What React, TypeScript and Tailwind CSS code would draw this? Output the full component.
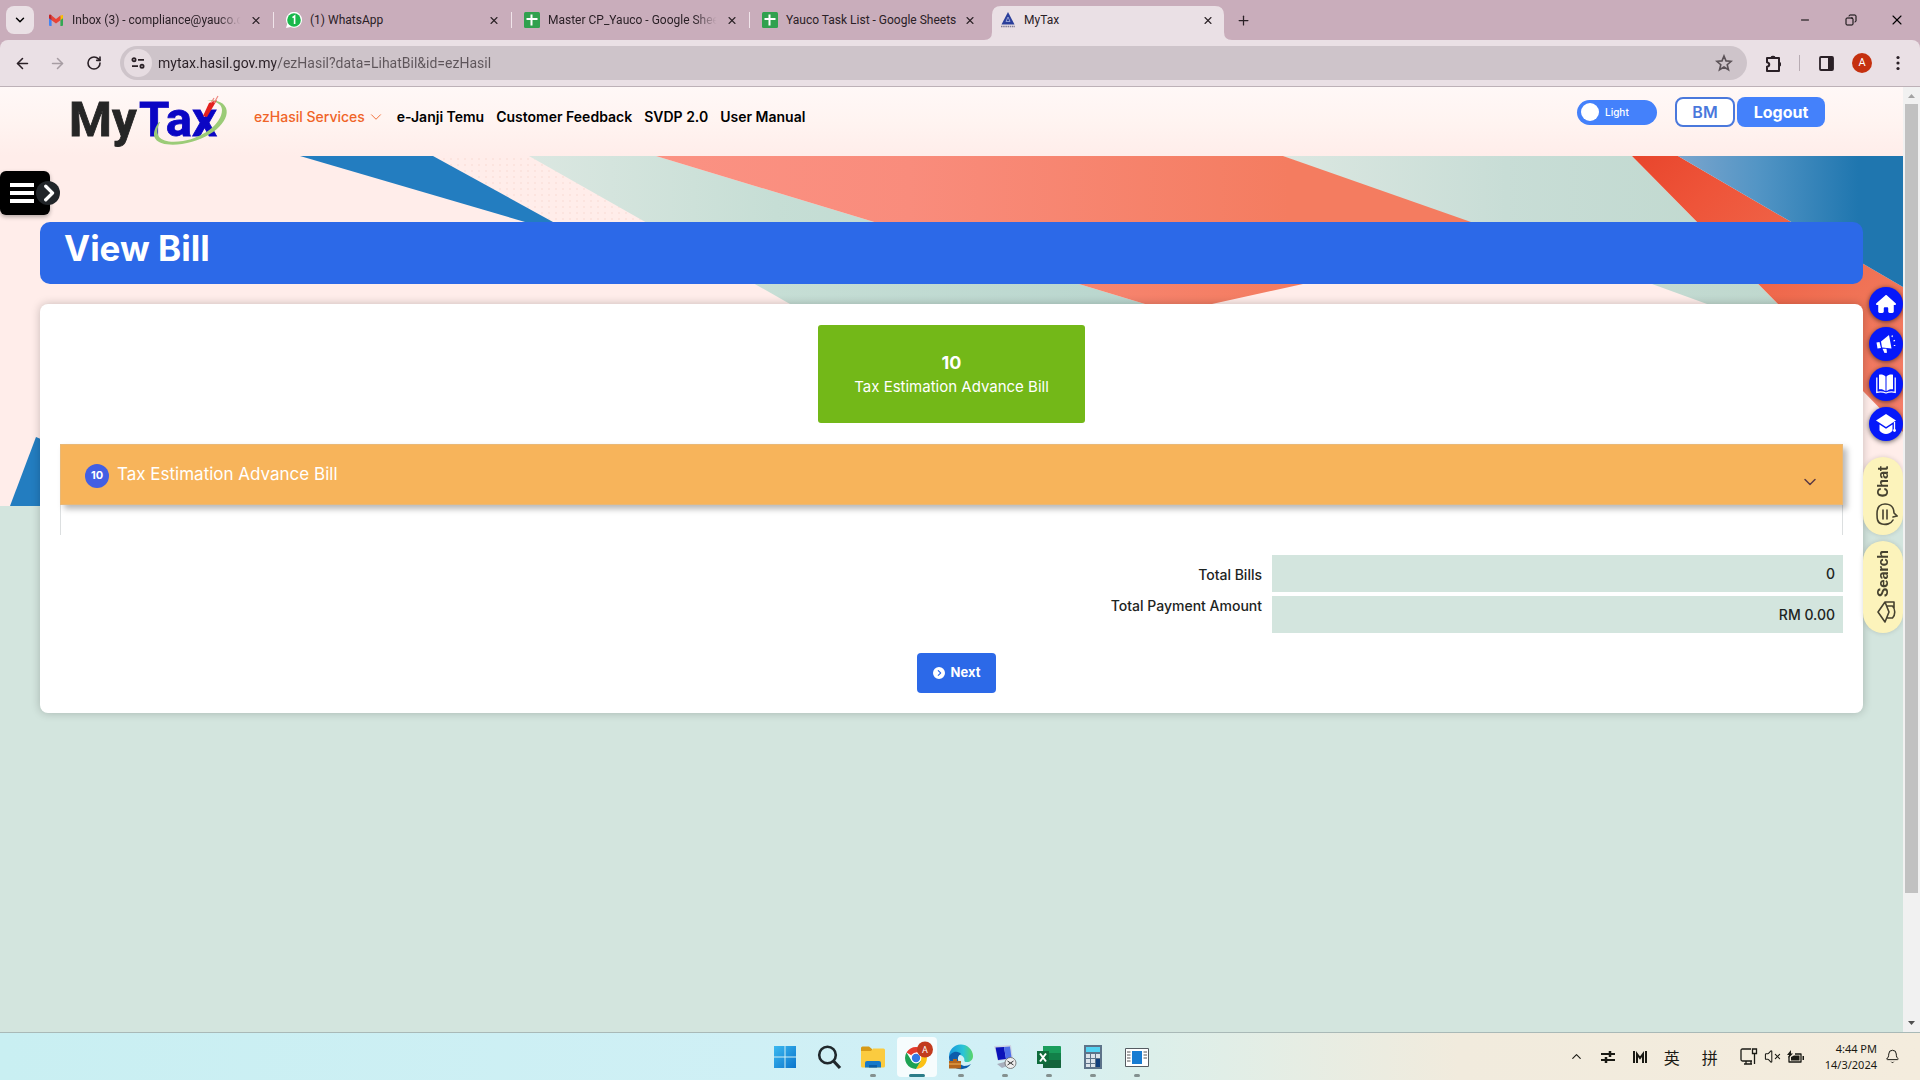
import React from "react";
import { ArrowLeft, ArrowRight, RotateCw, X, Plus, ChevronDown, ChevronUp, Minus, Copy, Bell, VolumeX } from "lucide-react";
import { FaHouse, FaCircleChevronRight, FaChevronRight } from "react-icons/fa6";

const uiFont = "font-['Roboto','Noto_Sans',sans-serif]";

function GmailIcon() {
  return (
    <svg viewBox="0 0 16 16" className="size-4">
      <path d="M1 3.5 3.6 5v9H2a1 1 0 0 1-1-1z" fill="#4285f4" />
      <path d="M15 3.5 12.400 5v9H14a1 1 0 0 0 1-1z" fill="#34a853" />
      <path d="M12.400 3.600 15 3v3.200l-2.600 2z" fill="#fbbc04" />
      <path d="M3.600 3.600 8 7l4.400-3.400v4.600L8 11.400 3.600 8.200z" fill="#ea4335" />
      <path d="M1 4c0-1.600 1.500-1.800 2.600-.8v5L1 6.200z" fill="#c5221f" />
    </svg>
  );
}

function WhatsAppIcon() {
  return (
    <svg viewBox="0 0 16 16" className="size-4">
      <path d="M0 16 1.200 12A8 8 0 1 1 4.500 15z" fill="#fff" />
      <circle cx="8" cy="8" r="6.800" fill="#19b84b" />
      <path d="M6.500 5.600 8.600 4v8" fill="none" stroke="#fff" strokeWidth="1.600" />
    </svg>
  );
}

function SheetsIcon() {
  return (
    <svg viewBox="0 0 16 16" className="size-4">
      <rect width="16" height="16" rx="1.500" fill="#30a14e" />
      <path d="M2.500 7h11M7.500 2.500v11" stroke="#fff" strokeWidth="2" />
    </svg>
  );
}

function MyTaxIcon() {
  return (
    <svg viewBox="0 0 16 16" className="size-4">
      <path d="M8 0 14.500 12.500h-13z" fill="#2b3f9b" />
      <path d="M8 5 10 9.500H6z" fill="none" stroke="#a9b4e0" strokeWidth=".8" />
      <path d="M1 14.500h14" stroke="#7f7b95" strokeWidth="1.500" strokeDasharray="1.500 .7" />
    </svg>
  );
}

const tabs = [
  { title: "Inbox (3) - compliance@yauco.c", icon: <GmailIcon /> },
  { title: "(1) WhatsApp", icon: <WhatsAppIcon /> },
  { title: "Master CP_Yauco - Google Shee", icon: <SheetsIcon /> },
  { title: "Yauco Task List - Google Sheets", icon: <SheetsIcon /> },
];

function TabStrip() {
  return (
    <div className="flex h-10 shrink-0 items-center bg-[#c9adbb] pl-1.5">
      <button aria-label="Search tabs" className="flex size-7 items-center justify-center rounded-lg bg-[#eae0e5]">
        <ChevronDown size={14} strokeWidth={2.5} />
      </button>
      <div className="ml-1.5 flex h-full items-center text-xs text-[#2a2026]">
        {tabs.map((t, i) => (
          <div key={t.title} className="flex h-full w-[238px] items-center pl-2">
            {t.icon}
            <span className={i % 2 === 0 ? "ml-2 w-[172px] whitespace-nowrap [mask-image:linear-gradient(to_right,black_85%,transparent_98%)]" : "ml-2 w-[172px] whitespace-nowrap"}>{t.title}</span>
            <button aria-label="Close tab" className="ml-1.5 flex w-3 justify-center"><X size={13} strokeWidth={2.2} /></button>
            {i < 3 && <span className="ml-auto mr-1 h-4 w-px bg-[#f0e4ea]" />}
          </div>
        ))}
        <div className="relative flex h-full w-[232px] items-center pl-2">
          <svg viewBox="0 0 248 34" className="absolute -left-2 bottom-0 h-[34px] w-[248px]" preserveAspectRatio="none">
            <path d="M0 34q8 0 8-8V9q0-9 9-9H231q9 0 9 9V26q0 8 8 8z" fill="#eae0e5" />
          </svg>
          <span className="relative"><MyTaxIcon /></span>
          <span className="relative ml-2 w-[172px]">MyTax</span>
          <button aria-label="Close tab" className="relative ml-1.5 flex w-3 justify-center"><X size={13} strokeWidth={2.2} /></button>
        </div>
        <button aria-label="New tab" className="ml-3"><Plus size={15} strokeWidth={2} /></button>
      </div>
      <div className="ml-auto flex">
        <button aria-label="Minimize" className="flex w-[46px] items-center justify-center"><Minus size={12} strokeWidth={2} /></button>
        <button aria-label="Restore" className="flex w-[46px] items-center justify-center"><Copy size={12} strokeWidth={2} className="-scale-x-100" /></button>
        <button aria-label="Close" className="flex w-[46px] items-center justify-center"><X size={16} strokeWidth={1.6} /></button>
      </div>
    </div>
  );
}

function Toolbar() {
  return (
    <div className="bg-[#c9adbb]">
      <div className="flex h-[47px] shrink-0 items-center rounded-t-lg border-b border-[#bdb1b7] bg-[#eae0e5] text-[#2a2026]">
        <button aria-label="Back" className="ml-3.5"><ArrowLeft size={17} strokeWidth={2.2} /></button>
        <button aria-label="Forward" className="ml-[18px] text-[#a79da3]"><ArrowRight size={17} strokeWidth={2.2} /></button>
        <button aria-label="Reload" className="ml-5"><RotateCw size={16} strokeWidth={2.4} /></button>
        <div className="ml-[18px] flex h-[34px] flex-1 items-center rounded-full bg-[#cec4ca] pl-1 pr-3.5">
          <button aria-label="Site information" className="flex size-7 items-center justify-center rounded-full bg-[#e6dce1]">
            <svg viewBox="0 0 14 12" className="h-3 w-3.5" fill="none" stroke="#2a2026" strokeWidth="1.800">
              <circle cx="3" cy="2.800" r="1.600" /><path d="M7 2.800h6M1 9.200h6" /><circle cx="11" cy="9.200" r="1.600" />
            </svg>
          </button>
          <input
            aria-label="Address"
            defaultValue="mytax.hasil.gov.my/ezHasil?data=LihatBil&id=ezHasil"
            className="ml-1.5 min-w-0 flex-1 bg-[linear-gradient(to_right,#2a2026_118px,#5e555a_118px)] bg-clip-text text-sm text-transparent caret-black outline-none"
          />
          <button aria-label="Bookmark">
            <svg viewBox="0 0 18 18" className="size-[18px]" fill="none" stroke="#5b5257" strokeWidth="1.600">
              <path d="m9 2 2 4.900 5.200.4-4 3.400 1.300 5.100L9 13l-4.500 2.800 1.300-5.100-4-3.400L7 6.900z" />
            </svg>
          </button>
        </div>
        <button aria-label="Extensions" className="ml-[17px]">
          <svg viewBox="0 0 19 19" className="size-[19px]" fill="none" stroke="#2a2026" strokeWidth="2">
            <path d="M3 4h4.200a2 2 0 0 1 3.600 0H15v4.500a2 2 0 0 1 0 3.500V17H3v-4.200c3-.6 3-4 0-4.600z" strokeLinejoin="round" />
            <path d="M7.200 4a2 2 0 0 1 3.600 0zM15 8.500a2 2 0 0 1 0 3.500z" fill="#2a2026" />
          </svg>
        </button>
        <span className="ml-4 h-4 w-px bg-[#b8acb3]" />
        <button aria-label="Side panel" className="ml-[19px]">
          <svg viewBox="0 0 15 15" className="size-[15px]"><rect x="1" y="1" width="13" height="13" rx="1" fill="none" stroke="#2a2026" strokeWidth="1.800" /><path d="M9 1h5v13H9z" fill="#2a2026" /></svg>
        </button>
        <button className="ml-[18px] flex size-5 items-center justify-center rounded-full bg-[#c5300f] text-[11px] text-white">A</button>
        <button aria-label="Menu" className="ml-6 mr-5">
          <svg viewBox="0 0 4 16" className="h-4 w-1" fill="#2a2026"><circle cx="2" cy="2.500" r="1.600" /><circle cx="2" cy="8" r="1.600" /><circle cx="2" cy="13.500" r="1.600" /></svg>
        </button>
      </div>
    </div>
  );
}

function HeroArt() {
  return (
    <svg viewBox="0 156 1903 350" preserveAspectRatio="none" className="absolute inset-x-0 top-[69px] h-[350px] w-full">
      <defs>
        <linearGradient id="mint"><stop offset="0" stopColor="#dbe7e1" /><stop offset=".4" stopColor="#c6ded5" /><stop offset="1" stopColor="#b9d6ce" /></linearGradient>
        <linearGradient id="coral"><stop offset="0" stopColor="#fb9283" /><stop offset=".3" stopColor="#f98c7c" /><stop offset=".75" stopColor="#f47c60" /></linearGradient>
        <linearGradient id="mint2"><stop offset="0" stopColor="#dbe7e1" /><stop offset=".45" stopColor="#c8ddd6" /><stop offset="1" stopColor="#bfd8ce" /></linearGradient>
        <linearGradient id="red" x2="1" y2="1"><stop offset="0" stopColor="#e8452c" /><stop offset=".2" stopColor="#ee5439" /><stop offset=".7" stopColor="#f07558" /><stop offset="1" stopColor="#f47f6c" /></linearGradient>
        <linearGradient id="blue"><stop offset="0" stopColor="#7ba5cd" /><stop offset=".35" stopColor="#5395c5" /><stop offset=".8" stopColor="#1f76af" /></linearGradient>
        <pattern id="dots" width="7" height="6" patternUnits="userSpaceOnUse"><circle cx="3" cy="3" r=".8" fill="#e9aaa4" fillOpacity=".35" /></pattern>
      </defs>
      <rect y="156" width="1903" height="350" fill="#ffedea" />
      <path d="M433 156h96l120 66H553z" fill="url(#dots)" />
      <path d="M300 156h133l120 66h-28z" fill="#237dc0" />
      <path d="M529 156h127l489 148H790z" fill="url(#mint)" />
      <path d="M1283 156h349l146 148h-71l-55-20-192-59z" fill="url(#mint2)" />
      <path d="M656 156h627l188 66 29 15-197 47-91 20h-67z" fill="url(#coral)" />
      <path d="M1632 156h46l225 131v145L1778 304z" fill="url(#red)" />
      <path d="M1678 156h225v131z" fill="url(#blue)" />
      <path d="m36 437 24 10v59H10z" fill="#237dc0" />
    </svg>
  );
}

function Logo() {
  return (
    <svg viewBox="0 0 160 56" className="h-14 w-40 overflow-visible" role="img" aria-label="MyTax">
      <text x="-3" y="43" fontFamily="Roboto, sans-serif" fontWeight="700" fontSize="49" fill="#262626" stroke="#262626" strokeWidth=".8">My</text>
      <text x="67" y="43" fontFamily="Roboto, sans-serif" fontWeight="700" fontSize="49" fill="#0b06c4" stroke="#0b06c4" strokeWidth=".8">Tax</text>
      <path d="M87 29C74 47 88 54 110 51c28-4 49-23 44-36-3-7-11-8-19-8 9 1 15 4 15 10 0 14-20 28-39 31C91 51 80 45 88 29z" fill="#9bcb77" />
      <path d="m131 23 6-13 8-3-10 17z" fill="#e4211e" />
      <path d="m139 10 3-5M142 10l4-7" stroke="#ee8880" strokeWidth="1.200" />
    </svg>
  );
}

function SiteHeader() {
  return (
    <header className="relative flex h-[69px] items-start bg-linear-to-b from-[#fff8f7] via-[#fff4f1] to-[#ffedea] pl-[72px] pr-[78px] font-['Inter',sans-serif]">
      <div className="mt-1.5 shrink-0"><Logo /></div>
      <nav className="ml-[22px] mt-5 flex items-center gap-3 whitespace-nowrap text-sm font-semibold text-black">
        <a href="#ezhasil" className="flex items-center gap-0.5 font-medium text-[#f06428]">ezHasil Services <ChevronDown size={18} strokeWidth={1.2} /></a>
        <a href="#temu">e-Janji Temu</a>
        <a href="#feedback">Customer Feedback</a>
        <a href="#svdp">SVDP 2.0</a>
        <a href="#manual">User Manual</a>
      </nav>
      <div className="ml-auto mt-2.5 flex items-center">
        <label className="mr-[18px] flex h-[25px] w-20 items-center rounded-full bg-[#4481fb] pl-1 text-[10px] font-medium text-white">
          <input type="checkbox" className="sr-only" />
          <span className="mr-1.5 size-[18px] rounded-full bg-white" />Light
        </label>
        <button className="h-[30px] w-[60px] rounded-lg border-2 border-[#4a78dc] bg-white text-base font-semibold text-[#4a78dc]">BM</button>
        <button className="ml-0.5 h-[30px] w-[88px] rounded-lg bg-[#4481fb] text-base font-bold text-white">Logout</button>
      </div>
    </header>
  );
}

function MegaphoneIcon() {
  return (
    <svg viewBox="0 0 20 20" className="size-5" fill="#fff">
      <path d="M13 1 5 7.500 6 13.500l9.500 1zM3.500 8 .5 8.500 1.500 14.500l3.500-.5zM6.500 14.800l4 0 .5 4-2.500.2z" />
      <path d="m16 3 .4-1.600M17.500 7 19 6.400M17.800 11.500h1.500" stroke="#fff" strokeWidth="1.200" />
    </svg>
  );
}

function BookIcon() {
  return (
    <svg viewBox="0 0 20 20" className="size-5" fill="#fff">
      <path d="M9.500 2.500C7.500.5 5 .3 3 .8v14.500c2.500-.3 4.800.2 6.500 2zM10.500 2.500c2-2 4.500-2.200 6.500-1.700v14.500c-2.500-.3-4.800.2-6.500 2z" />
      <path d="M.8 3.500v14.800c3.200-.8 6-.7 9.200.7 3.200-1.400 6-1.500 9.200-.7V3.500" fill="none" stroke="#fff" strokeWidth="1.300" />
    </svg>
  );
}

function CapIcon() {
  return (
    <svg viewBox="0 0 20 20" className="size-5" fill="#fff">
      <path d="M10 0 20 6.500 10 13 0 6.500z" />
      <path d="M3.500 10.500 10 14.700l6.500-4.200v6c-3 4.500-10 4.500-13 0z" />
      <path d="M18.500 8v9" stroke="#fff" strokeWidth="1.300" /><circle cx="18.500" cy="16.500" r="1.400" />
    </svg>
  );
}

function SideDock() {
  const items = [
    { label: "Home", icon: <FaHouse size={20} /> },
    { label: "Announcements", icon: <MegaphoneIcon /> },
    { label: "Manual", icon: <BookIcon /> },
    { label: "Learning", icon: <CapIcon /> },
  ];
  return (
    <aside className="absolute right-0 top-[200px] flex flex-col items-end text-[15px] font-bold text-[#464230]">
      {items.map((i) => (
        <button key={i.label} aria-label={i.label} className="mb-1.5 flex size-[34px] items-center justify-center rounded-full bg-[#0518fa] text-white shadow-[0_1px_5px_rgba(0,0,0,0.6)]">{i.icon}</button>
      ))}
      <button className="mt-2.5 flex h-[78px] w-10 flex-col items-center justify-center gap-1 rounded-full bg-[#fcf3bb] shadow-[0_0_5px_rgba(0,0,0,0.15)]">
        <span className="rotate-180 [writing-mode:vertical-rl]">Chat</span>
        <svg viewBox="0 0 22 24" className="ml-2 h-6 w-[22px]" fill="none" stroke="#464230" strokeWidth="1.600" strokeLinecap="round">
          <path d="M17 18c-2 4-7 5-11 4-5-1-5-6-5-10C1 5 4 2 9 2c6 0 9 4 9 9l3 3-4 1M7 8v9M11 8v9" />
        </svg>
      </button>
      <button className="mt-1.5 flex h-[92px] w-10 flex-col items-center justify-center gap-1 rounded-full bg-[#fcf3bb] shadow-[0_0_5px_rgba(0,0,0,0.15)]">
        <span className="rotate-180 [writing-mode:vertical-rl]">Search</span>
        <svg viewBox="0 0 22 24" className="ml-2 h-6 w-[22px]" fill="none" stroke="#464230" strokeWidth="1.600" strokeLinejoin="round">
          <path d="M2 12 9 2l4 10-4 10zM10.500 6h6c3 3 3 9 0 12h-6M9 2h9v6" />
        </svg>
      </button>
    </aside>
  );
}

function PageScrollbar() {
  return (
    <div className="flex w-[17px] shrink-0 flex-col items-center bg-[#f1f1f1]">
      <svg viewBox="0 0 17 17" className="size-[17px]"><path d="M5 11h7L8.500 7z" fill="#a3a3a3" /></svg>
      <div className="h-[789px] w-[13px] bg-[#c1c1c1]" />
      <svg viewBox="0 0 17 17" className="mt-auto size-[17px]"><path d="M5 6h7l-3.500 4z" fill="#505050" /></svg>
    </div>
  );
}

function BillPage() {
  return (
    <main className="relative px-10 pt-[66px] font-['Inter',sans-serif]">
      <h1 className="h-[62px] rounded-[10px] bg-[#2c69e8] px-6 pt-1.5 text-[35px] font-bold leading-10 text-white">View Bill</h1>
      <section className="mt-5 rounded-lg bg-white px-5 pb-5 pt-[21px] shadow-[0_0_10px_rgba(0,0,0,0.22)]">
        <div className="mx-auto flex h-[98px] w-[267px] flex-col items-center justify-center rounded-[3px] bg-[#73b818] pt-0.5 text-white">
          <strong className="text-lg font-bold leading-6">10</strong>
          <span className="text-[15px] leading-6">Tax Estimation Advance Bill</span>
        </div>
        <div className="mt-[21px] h-[91px] border-x border-[#dcdfe0]">
          <button className="-mx-px flex h-[61px] w-[calc(100%+2px)] items-center border border-[#e9b876] bg-[#f7b45b] px-6 text-left text-white shadow-[4px_4px_6px_rgba(0,0,0,0.28)]">
            <span className="mt-0.5 flex size-6 items-center justify-center rounded-full bg-[#425fe4] text-[11px] font-bold">10</span>
            <span className="ml-2 text-[17px]">Tax Estimation Advance Bill</span>
            <ChevronDown size={20} strokeWidth={1.8} className="-mr-0.5 ml-auto mt-3.5 text-[#5c3b45]" />
          </button>
        </div>
        <div className="mt-5 grid grid-cols-[1fr_571px] gap-x-2.5 gap-y-1 text-sm font-medium text-[#1d2422]">
          <label htmlFor="bills" className="pt-2.5 text-right leading-5">Total Bills</label>
          <input id="bills" readOnly value="0" className="h-[37px] bg-[#d3e5de] px-2 text-right" />
          <label htmlFor="amount" className="text-right leading-5">Total Payment Amount</label>
          <input id="amount" readOnly value="RM 0.00" className="h-[37px] bg-[#d3e5de] px-2 text-right" />
        </div>
        <div className="ml-2.5 mt-5 flex justify-center">
          <button className="flex h-10 w-[79px] items-center justify-center gap-1.5 rounded bg-[#2c69e8] text-[13px] font-bold text-white"><FaCircleChevronRight size={12} />Next</button>
        </div>
      </section>
    </main>
  );
}

function SideMenuToggle() {
  return (
    <button aria-label="Open menu" className="absolute left-0 top-[84px] flex h-11 w-[50px] items-center rounded-md bg-black pl-2.5 shadow-[0_2px_4px_rgba(0,0,0,0.3)]">
      <svg viewBox="0 0 24 20" className="h-5 w-6"><path d="M0 2h24M0 10h24M0 18h24" stroke="#fff" strokeWidth="3.800" /></svg>
      <span className="absolute -right-2.5 flex size-6 items-center justify-center rounded-full bg-[#212529] text-white"><FaChevronRight size={18} strokeWidth={30} stroke="#fff" /></span>
    </button>
  );
}

const apps = [
  {
    name: "Start", active: "",
    icon: <g><linearGradient id="win" x2="1" y2="1"><stop stopColor="#3cb9f0" /><stop offset="1" stopColor="#0b75cc" /></linearGradient><path d="M1 1h10.500v10.500H1zM12.500 1H23v10.500H12.500zM1 12.500h10.500V23H1zM12.500 12.500H23V23H12.500z" fill="url(#win)" /></g>,
  },
  { name: "Search", active: "", icon: <g fill="none" stroke="#20282c" strokeWidth="2.600"><circle cx="10.500" cy="10" r="8.300" /><path d="m16.500 16 6.500 7" strokeWidth="3.200" /></g> },
  {
    name: "File Explorer", active: "dot",
    icon: <g><path d="M0 3a1.500 1.500 0 0 1 1.500-1.500H8L11 4v5H0z" fill="#d79a16" /><path d="M0 6h10l2-2.500h10.500A1.500 1.500 0 0 1 24 5v16a1.500 1.500 0 0 1-1.500 1.500h-21A1.500 1.500 0 0 1 0 21z" fill="#fbcb3f" /><path d="M4 22.500V18q0-2 2-2h12q2 0 2 2v4.500z" fill="#1679c9" /><path d="M8 20h8v2.500H8z" fill="#0a5da6" /></g>,
  },
  {
    name: "Chrome", active: "wide",
    icon: <g><circle cx="11" cy="13" r="11" fill="#fff" /><path d="M11 13 1.500 7.500A11 11 0 0 1 20.500 7.500H11z" fill="#e33b2e" /><path d="M11 13l9.500-5.500A11 11 0 0 1 11 24l4.700-8.500z" fill="#fbc116" /><path d="M11 13 15.700 16 11 24A11 11 0 0 1 1.500 7.500l5 8z" fill="#1da253" /><circle cx="11" cy="13" r="5.400" fill="#fff" /><circle cx="11" cy="13" r="4.200" fill="#3478e5" /><circle cx="20" cy="4.500" r="8" fill="#c23b1e" /><text x="20" y="8" fontSize="9" textAnchor="middle" fill="#fff" fontFamily="Roboto, sans-serif">A</text></g>,
  },
  {
    name: "Edge", active: "dot",
    icon: <g><linearGradient id="edge"><stop stopColor="#1796dd" /><stop offset=".6" stopColor="#2bc4d6" /><stop offset="1" stopColor="#5ad565" /></linearGradient><path d="M0 12a12 12 0 0 1 24-1c0 4-3 6-6 6-4 0-2-2-3-4-2-4-8-4-11-1-2 2-3 2-4 0z" fill="url(#edge)" /><path d="M0 12C3 5 10 6 12 9c-5 2-4 10 3 12 3 0 5-1 7-2-4 6-13 7-18 2C1 19 0 16 0 12z" fill="#0d5cab" /><path d="M0 16h12v7.500H0zM4 16v-2h4v2" fill="#b4661d" /><path d="M0 19h12" stroke="#f3b55b" /></g>,
  },
  {
    name: "Remote Desktop", active: "dot",
    icon: <g><path d="M1 1 18 0l2 14-15 2z" fill="#cdd3e3" /><path d="M2.500 2.500 11 2l2 12-8 1z" fill="#0b12b8" /><path d="m11 2 6-.5 1.500 11L13 14z" fill="#4f6ee8" /><path d="m4 19 11-3 4 3-10 4z" fill="#a8afbd" /><circle cx="17.500" cy="18" r="5.500" fill="#eee" stroke="#666" strokeWidth=".8" /><path d="m14.500 16 3 2-3 2M20.500 16l-3 2 3 2" fill="none" stroke="#333" /></g>,
  },
  {
    name: "Excel", active: "dot",
    icon: <g><path d="M6 1h17a1 1 0 0 1 1 1v20a1 1 0 0 1-1 1H6z" fill="#1a9d5c" /><path d="M6 8h18v7H6z" fill="#128049" /><path d="M6 15h18v7a1 1 0 0 1-1 1H6z" fill="#15633c" /><path d="M0 6h12v13H0z" fill="#0f6b3b" /><path d="m3 8.500 6 8M9 8.500l-6 8" stroke="#fff" strokeWidth="2" /></g>,
  },
  {
    name: "Calculator", active: "dot",
    icon: <g><path d="M3 0h18v24H3z" fill="#5d7389" /><path d="M5 2h14v5H5z" fill="#53d2f2" /><path d="M5 9h4v4H5zM10 9h4v4h-4zM15 9h4v4h-4zM5 14h4v4H5zM10 14h4v4h-4zM5 19h4v3H5zM10 19h4v3h-4z" fill="#dce3ea" /><path d="M15 14h4v8h-4z" fill="#123f7c" /></g>,
  },
  {
    name: "App", active: "dot",
    icon: <g><path d="M.5 3.500h23v18H.5z" fill="#fff" stroke="#555c62" /><path d="M7 6h10v13H7z" fill="#187cd2" /><path d="M2 7h3.500M2 10h3.500M2 13h3.500M2 16h3.500M18.500 7H22M18.500 10H22M18.500 13H22" stroke="#555" /></g>,
  },
];

function Taskbar() {
  return (
    <footer className="relative flex h-12 shrink-0 items-center justify-center border-t border-[#a9b9b7] bg-[linear-gradient(to_right,#c9eff2_0%,#d1f0f6_52%,#dcefea_60%,#f1ebdd_76%,#f4ecdd_100%)]">
      <div className="flex gap-1 pl-0.5">
        {apps.map((a) => (
          <button key={a.name} aria-label={a.name} className={a.active === "wide" ? "relative flex h-10 w-10 items-center justify-center rounded bg-white/80" : "relative flex h-10 w-10 items-center justify-center"}>
            <svg viewBox="0 0 24 24" className="size-6 overflow-visible">{a.icon}</svg>
            {a.active === "dot" && <span className="absolute bottom-0 h-[3px] w-1.5 rounded-full bg-[#84908f]" />}
            {a.active === "wide" && <span className="absolute bottom-0 h-[3px] w-4 rounded-full bg-[#2c7d89]" />}
          </button>
        ))}
      </div>
      <div className="absolute inset-y-0 right-5 flex items-center text-[#1a1a14]">
        <ChevronUp size={15} strokeWidth={1.8} className="mr-[17px]" />
        <svg viewBox="0 0 14 12" className="mr-[18px] h-3 w-3.5" stroke="currentColor" strokeWidth="2"><path d="M0 3h14M0 9h14" /><path d="M9 0v6M5 6v6" strokeWidth="2.500" /></svg>
        <svg viewBox="0 0 14 12" className="mr-[17px] h-3 w-3.5" fill="none" stroke="currentColor" strokeWidth="2"><path d="M1 0v12M13 0v12M4 12V3l3 4 3-4v9" /></svg>
        <span className="mr-[22px] font-['Noto_Sans_CJK_SC',sans-serif] text-base">英</span>
        <span className="mr-[22px] font-['Noto_Sans_CJK_SC',sans-serif] text-base">拼</span>
        <svg viewBox="0 0 18 17" className="mr-1.5 h-[17px] w-[18px]" fill="none" stroke="currentColor" strokeWidth="1.300"><path d="M11 1H2.500Q1 1 1 2.500v9Q1 13 2.500 13H12M4 16h8M6 13v3M11 13v3M12.500 1h4v4.500h-4zM14.500 5.500V16" /></svg>
        <VolumeX size={17} strokeWidth={1.5} className="mr-1.5" />
        <svg viewBox="0 0 18 14" className="mr-5 h-3.5 w-[18px]"><path d="M2 6v6h12V4H8" fill="none" stroke="currentColor" strokeWidth="1.300" strokeLinejoin="round" /><path d="M4 7 7 5.500h5.500v5H4zM15.500 6H17v4h-1.500zM4 0 0 5h2L1.500 8 6 3.500H4z" fill="currentColor" /></svg>
        <div className="mr-2 text-right font-['Noto_Sans',sans-serif] text-[11px] leading-4"><div>4:44 PM</div><div>14/3/2024</div></div>
        <Bell size={15} strokeWidth={1.6} />
      </div>
    </footer>
  );
}

export default function App() {
  return (
    <div className={"flex h-screen flex-col overflow-hidden " + uiFont}>
      <TabStrip />
      <Toolbar />
      <div className="flex min-h-0 flex-1">
        <div className="relative min-w-0 flex-1 overflow-hidden bg-[#d3e5de]">
          <HeroArt />
          <SiteHeader />
          <BillPage />
          <SideMenuToggle />
          <SideDock />
        </div>
        <PageScrollbar />
      </div>
      <Taskbar />
    </div>
  );
}
